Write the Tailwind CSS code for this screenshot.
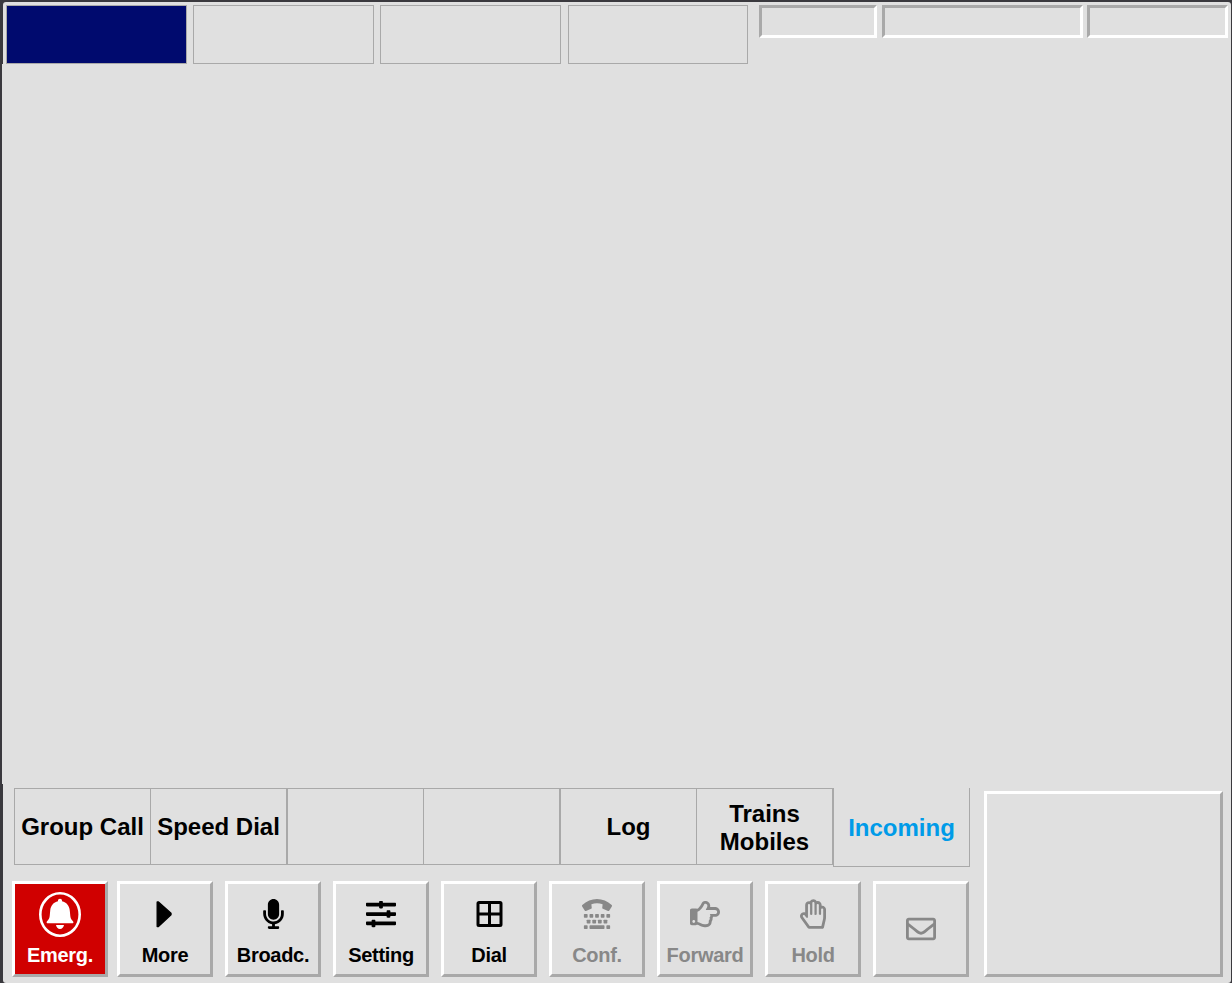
<!DOCTYPE html>
<html lang="en">
<head>
<meta charset="utf-8">
<title>Dispatcher Terminal</title>
<script src="https://cdn.jsdelivr.net/npm/@tailwindcss/browser@4"></script>
</head>
<body class="bg-[#3a393e]">
<div class="h-[983px] w-[1232px] overflow-hidden pt-[2px] pr-px font-['Liberation_Sans',Arial,sans-serif] font-bold text-black flex flex-col">

  <!-- Status bar -->
  <header class="ml-[3px] h-[62px] shrink-0 rounded-t-[3px] bg-[#e0e0e0] pt-[3px] pl-[3px] flex items-start">
    <div class="h-[59px] w-[181px] border border-[#a9a9a9] bg-[#000a6e]"></div>
    <div class="ml-[6px] h-[59px] w-[181px] border border-[#a9a9a9]"></div>
    <div class="ml-[6px] h-[59px] w-[181px] border border-[#a9a9a9]"></div>
    <div class="ml-[7px] h-[59px] w-[180px] border border-[#a9a9a9]"></div>
    <div class="ml-[11px] h-[33px] w-[118px] border-3 border-t-[#a9a9a9] border-l-[#a9a9a9] border-r-white border-b-white"></div>
    <div class="ml-[5px] h-[33px] w-[201px] border-3 border-t-[#a9a9a9] border-l-[#a9a9a9] border-r-white border-b-white"></div>
    <div class="ml-[4px] h-[33px] w-[141px] border-3 border-t-[#a9a9a9] border-l-[#a9a9a9] border-r-white border-b-white"></div>
  </header>

  <!-- Call area -->
  <main class="ml-[2px] h-[720px] shrink-0 bg-[#e0e0e0]"></main>

  <footer class="ml-[3px] h-[199px] shrink-0 rounded-b-[3px] bg-[#e0e0e0] flex items-start">
    <div class="w-[981px] pl-[9px] pt-[4px]">
      <!-- Tabs -->
      <nav class="ml-[2px] flex h-[93px] items-start text-center text-2xl leading-7">
        <div class="flex h-[77px] w-[136px] items-center justify-center border-y border-l border-[#a9a9a9] whitespace-nowrap">Group Call</div>
        <div class="flex h-[77px] w-[137px] items-center justify-center border border-[#a9a9a9] whitespace-nowrap">Speed Dial</div>
        <div class="h-[77px] w-[136px] border-y border-l border-[#a9a9a9]"></div>
        <div class="h-[77px] w-[137px] border border-[#a9a9a9]"></div>
        <div class="flex h-[77px] w-[136px] items-center justify-center border-y border-l border-[#a9a9a9]">Log</div>
        <div class="flex h-[77px] w-[137px] items-center justify-center border border-[#a9a9a9] pt-[2px]">Trains<br>Mobiles</div>
        <div class="flex h-[79px] w-[137px] items-center justify-center border-x border-b border-[#a9a9a9] pt-[2px] text-[#009be8]">Incoming</div>
      </nav>

      <!-- Function keys -->
      <div class="flex text-center text-xl leading-6 tracking-[-0.3px]">
        <button class="mr-[9px] flex size-24 flex-col items-center border-3 border-t-white border-l-white border-r-[#a9a9a9] border-b-[#a9a9a9] bg-[#d00000] pt-[7px] text-white">
          <svg class="h-[47px] w-11 shrink-0" viewBox="0 0 44 47"><ellipse cx="22" cy="23.500" rx="19.700" ry="21.200" fill="none" stroke="currentColor" stroke-width="2.600"/><path fill="currentColor" d="M22 7.700c1.300 0 2 .8 2 1.900v.7c4.500 1 7.300 4.200 7.800 9.400l.5 5.300c.2 2 .8 3.200 2 4.400.8.700 1.100 1.300 1.100 1.900 0 .7-.4 1-1 1H9.600c-.6 0-1-.3-1-1 0-.6.3-1.200 1.100-1.900 1.200-1.200 1.800-2.400 2-4.400l.5-5.300c.5-5.200 3.300-8.400 7.800-9.400v-.7c0-1.100.7-1.900 2-1.900zM18 34h8c-.3 2.400-1.900 3.900-4 3.900s-3.700-1.500-4-3.900z"/></svg>
          <span class="mt-[5px]">Emerg.</span>
        </button>
        <div class="flex gap-3">
          <button class="flex size-24 flex-col items-center border-3 border-t-white border-l-white border-r-[#a9a9a9] border-b-[#a9a9a9] pt-[15px]">
            <svg class="h-[30px] w-[18px] shrink-0" viewBox="0 0 18 30"><path fill="currentColor" stroke="currentColor" stroke-width="1.400" stroke-linejoin="round" d="M1.200 2.900h1.200L15 14.200v1.600L2.400 27.500H1.200z"/></svg>
            <span class="mt-[14px]">More</span>
          </button>
          <button class="flex size-24 flex-col items-center border-3 border-t-white border-l-white border-r-[#a9a9a9] border-b-[#a9a9a9] pt-[15px]">
            <svg class="h-[30px] w-[21px] shrink-0" viewBox="0 0 352 512" fill="currentColor"><path d="M176 352c53.020 0 96-42.980 96-96V96c0-53.020-42.980-96-96-96S80 42.980 80 96v160c0 53.020 42.980 96 96 96zm160-160h-16c-8.840 0-16 7.160-16 16v48c0 74.800-64.490 134.820-140.790 127.380C96.710 376.890 48 317.110 48 250.300V208c0-8.840-7.160-16-16-16H16c-8.840 0-16 7.160-16 16v40.160c0 89.640 63.970 169.550 152 181.690V464H96c-8.840 0-16 7.160-16 16v16c0 8.840 7.160 16 16 16h160c8.840 0 16-7.160 16-16v-16c0-8.840-7.160-16-16-16h-56v-33.770C285.710 418.470 352 344.900 352 256v-48c0-8.840-7.160-16-16-16z"/></svg>
            <span class="mt-[14px]">Broadc.</span>
          </button>
          <button class="flex size-24 flex-col items-center border-3 border-t-white border-l-white border-r-[#a9a9a9] border-b-[#a9a9a9] pt-[15px]">
            <svg class="size-[30px] shrink-0" viewBox="0 0 512 512" fill="currentColor"><path d="M496 384H160v-16c0-8.800-7.200-16-16-16h-32c-8.800 0-16 7.200-16 16v16H16c-8.800 0-16 7.200-16 16v32c0 8.800 7.200 16 16 16h80v16c0 8.800 7.200 16 16 16h32c8.800 0 16-7.200 16-16v-16h336c8.800 0 16-7.200 16-16v-32c0-8.800-7.200-16-16-16zm0-160h-80v-16c0-8.800-7.200-16-16-16h-32c-8.800 0-16 7.200-16 16v16H16c-8.800 0-16 7.200-16 16v32c0 8.800 7.200 16 16 16h336v16c0 8.800 7.200 16 16 16h32c8.800 0 16-7.200 16-16v-16h80c8.800 0 16-7.200 16-16v-32c0-8.800-7.200-16-16-16zm0-160H288V48c0-8.800-7.200-16-16-16h-32c-8.800 0-16 7.200-16 16v16H16C7.200 64 0 71.200 0 80v32c0 8.800 7.200 16 16 16h208v16c0 8.800 7.200 16 16 16h32c8.800 0 16-7.200 16-16v-16h208c8.800 0 16-7.200 16-16V80c0-8.800-7.200-16-16-16z"/></svg>
            <span class="mt-[14px]">Setting</span>
          </button>
          <button class="flex size-24 flex-col items-center border-3 border-t-white border-l-white border-r-[#a9a9a9] border-b-[#a9a9a9] pt-[15px]">
            <svg class="h-[30px] w-[27px] shrink-0" viewBox="0 0 27 30" fill="none" stroke="currentColor" stroke-width="3"><path d="M3 3.500h21a1 1 0 0 1 1 1v21a1 1 0 0 1-1 1H3a1 1 0 0 1-1-1v-21a1 1 0 0 1 1-1zM13.500 3.500v23M2 15h23"/></svg>
            <span class="mt-[14px]">Dial</span>
          </button>
          <button class="flex size-24 flex-col items-center border-3 border-t-white border-l-white border-r-[#a9a9a9] border-b-[#a9a9a9] pt-[15px] text-[#888888]">
            <svg class="size-[30px] shrink-0" viewBox="0 0 512 512" fill="currentColor"><path d="M5.370 103.822c138.532-138.532 362.936-138.326 501.262 0 6.078 6.078 7.074 15.496 2.583 22.681l-43.214 69.138a18.332 18.332 0 0 1-22.356 7.305l-86.422-34.569a18.335 18.335 0 0 1-11.434-18.846L351.741 90c-62.145-22.454-130.636-21.986-191.483 0l5.953 59.532a18.331 18.331 0 0 1-11.434 18.846l-86.423 34.568a18.334 18.334 0 0 1-22.356-7.305L2.787 126.502a18.333 18.333 0 0 1 2.583-22.680z"/><rect x="32" y="256" width="64" height="64" rx="12"/><rect x="128" y="256" width="64" height="64" rx="12"/><rect x="224" y="256" width="64" height="64" rx="12"/><rect x="320" y="256" width="64" height="64" rx="12"/><rect x="416" y="256" width="64" height="64" rx="12"/><rect x="80" y="352" width="64" height="64" rx="12"/><rect x="176" y="352" width="64" height="64" rx="12"/><rect x="272" y="352" width="64" height="64" rx="12"/><rect x="368" y="352" width="64" height="64" rx="12"/><rect x="32" y="448" width="64" height="64" rx="12"/><rect x="128" y="448" width="256" height="64" rx="12"/><rect x="416" y="448" width="64" height="64" rx="12"/></svg>
            <span class="mt-[14px]">Conf.</span>
          </button>
          <button class="flex size-24 flex-col items-center border-3 border-t-white border-l-white border-r-[#a9a9a9] border-b-[#a9a9a9] pt-[15px] text-[#888888]">
            <svg class="size-[30px] shrink-0" viewBox="0 0 512 512" fill="currentColor"><path d="M428.800 137.600h-86.177a115.520 115.520 0 0 0 2.176-22.400c0-47.914-35.072-83.200-92-83.200-45.314 0-57.002 48.537-75.707 78.784-7.735 12.413-16.994 23.317-25.851 33.253l-.131.146-.129.148C135.662 161.807 127.764 168 120.800 168h-2.679c-5.747-4.952-13.536-8-22.120-8H32c-17.673 0-32 12.894-32 28.800v230.400C0 435.106 14.327 448 32 448h64c8.584 0 16.373-3.048 22.120-8h2.679c28.688 0 67.137 40 127.200 40h21.299c62.542 0 98.800-38.658 99.940-91.145 12.482-17.813 18.491-40.785 15.985-62.791A93.148 93.148 0 0 0 393.152 304H428.800c45.435 0 83.200-37.584 83.200-83.200 0-45.099-38.101-83.200-83.200-83.200zm0 118.400h-91.026c12.837 14.669 14.415 42.825-4.950 61.050 11.227 19.646 1.687 45.624-12.925 53.625 6.524 39.128-10.076 61.325-50.600 61.325H248c-45.491 0-77.210-35.913-120-39.676V215.571c25.239-2.964 42.966-21.222 59.075-39.596 11.275-12.650 21.725-25.300 30.799-39.875C232.355 112.712 244.006 80 252.800 80c23.375 0 44 8.800 44 35.200 0 35.200-26.400 53.075-26.400 70.400h158.400c18.425 0 35.200 16.500 35.200 35.200 0 18.975-16.225 35.200-35.200 35.200zM88 384c0 13.255-10.745 24-24 24s-24-10.745-24-24 10.745-24 24-24 24 10.745 24 24z"/></svg>
            <span class="mt-[14px]">Forward</span>
          </button>
          <button class="flex size-24 flex-col items-center border-3 border-t-white border-l-white border-r-[#a9a9a9] border-b-[#a9a9a9] pt-[15px] text-[#888888]">
            <svg class="h-[30px] w-[26px] shrink-0" viewBox="0 0 448 512" fill="currentColor"><path d="M372.570 112.641v-10.825c0-43.612-40.520-76.691-83.039-65.546-25.629-49.500-94.090-47.450-117.982.747C130.269 26.456 89.144 57.945 89.144 102v126.130c-19.953-7.427-43.308-5.068-62.083 8.871-29.355 21.796-35.794 63.333-14.550 93.153L132.480 498.569a32 32 0 0 0 26.062 13.432h222.897c14.904 0 27.835-10.289 31.182-24.813l30.184-130.958A203.637 203.637 0 0 0 448 310.564V179c0-40.620-35.523-71.992-75.430-66.359zm27.427 197.922c0 11.731-1.334 23.469-3.965 34.886L368.707 464h-201.920L51.591 302.303c-14.439-20.270 15.023-42.776 29.394-22.605l27.128 38.079c8.995 12.626 29.031 6.287 29.031-9.283V102c0-25.645 36.571-24.810 36.571.691V256c0 8.837 7.163 16 16 16h6.856c8.837 0 16-7.163 16-16V67c0-25.663 36.571-24.810 36.571.691V256c0 8.837 7.163 16 16 16h6.856c8.837 0 16-7.163 16-16V101.125c0-25.672 36.570-24.810 36.570.691V256c0 8.837 7.163 16 16 16h6.857c8.837 0 16-7.163 16-16v-76.309c0-26.242 36.570-25.640 36.570-.691v131.563z"/></svg>
            <span class="mt-[14px]">Hold</span>
          </button>
          <button class="flex size-24 items-center justify-center border-3 border-t-white border-l-white border-r-[#a9a9a9] border-b-[#a9a9a9] text-[#888888]">
            <svg class="size-[30px] shrink-0" viewBox="0 0 512 512" fill="currentColor"><path d="M464 64H48C21.490 64 0 85.490 0 112v288c0 26.510 21.490 48 48 48h416c26.510 0 48-21.490 48-48V112c0-26.510-21.490-48-48-48zm0 48v40.805c-22.422 18.259-58.168 46.651-134.587 106.490-16.841 13.247-50.201 45.072-73.413 44.701-23.208.375-56.579-31.459-73.413-44.701C106.180 199.465 70.425 171.067 48 152.805V112h416zM48 400V214.398c22.914 18.251 55.409 43.862 104.938 82.646 21.857 17.205 60.134 55.186 103.062 54.955 42.717.231 80.509-37.199 103.053-54.947 49.528-38.783 82.032-64.401 104.947-82.653V400H48z"/></svg>
          </button>
        </div>
      </div>
    </div>
    <div class="mt-[7px] h-[186px] w-[239px] border-3 border-t-white border-l-white border-r-[#a9a9a9] border-b-[#a9a9a9]"></div>
  </footer>
</div>
</body>
</html>
